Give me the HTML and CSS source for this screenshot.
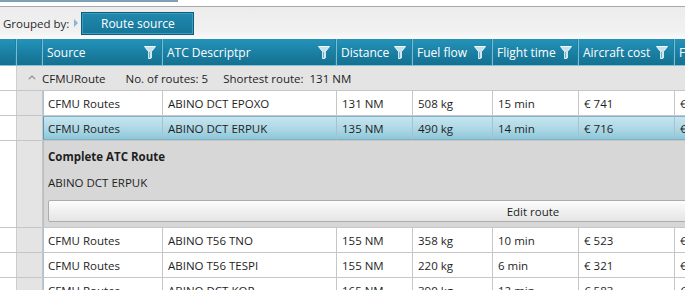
FILE: index.html
```html
<!DOCTYPE html>
<html lang="en">

<head>
    <meta charset="UTF-8">
    <title>Route options</title>
    <link rel="stylesheet" href="styles.css">
</head>

<body>
    <div class="top-strip">
        <div class="tab-line"></div>
    </div>

    <div class="group-panel">
        <span class="group-label">Grouped by:</span>
        <span class="group-arrow"></span>
        <button class="group-chip">Route source</button>
    </div>

    <div class="grid">
        <div class="row header">
            <div class="cell"></div>
            <div class="cell"></div>
            <div class="cell">Source <svg class="funnel" width="12" height="13" viewBox="0 0 12 13"><path d="M0.5 0.5h11l-4.2 5.2v6.3l-2.6 0.8v-7.1z" /><path d="M5.5 6v6" class="stem" /></svg></div>
            <div class="cell">ATC Descriptpr <svg class="funnel" width="12" height="13" viewBox="0 0 12 13"><path d="M0.5 0.5h11l-4.2 5.2v6.3l-2.6 0.8v-7.1z" /><path d="M5.5 6v6" class="stem" /></svg></div>
            <div class="cell">Distance <svg class="funnel" width="12" height="13" viewBox="0 0 12 13"><path d="M0.5 0.5h11l-4.2 5.2v6.3l-2.6 0.8v-7.1z" /><path d="M5.5 6v6" class="stem" /></svg></div>
            <div class="cell">Fuel flow <svg class="funnel" width="12" height="13" viewBox="0 0 12 13"><path d="M0.5 0.5h11l-4.2 5.2v6.3l-2.6 0.8v-7.1z" /><path d="M5.5 6v6" class="stem" /></svg></div>
            <div class="cell">Flight time <svg class="funnel" width="12" height="13" viewBox="0 0 12 13"><path d="M0.5 0.5h11l-4.2 5.2v6.3l-2.6 0.8v-7.1z" /><path d="M5.5 6v6" class="stem" /></svg></div>
            <div class="cell">Aircraft cost <svg class="funnel" width="12" height="13" viewBox="0 0 12 13"><path d="M0.5 0.5h11l-4.2 5.2v6.3l-2.6 0.8v-7.1z" /><path d="M5.5 6v6" class="stem" /></svg></div>
            <div class="cell">Fuel cost <svg class="funnel" width="12" height="13" viewBox="0 0 12 13"><path d="M0.5 0.5h11l-4.2 5.2v6.3l-2.6 0.8v-7.1z" /><path d="M5.5 6v6" class="stem" /></svg></div>
        </div>

        <div class="row group-row">
            <div class="cell"></div>
            <div class="group-body">
                <svg class="caret" width="8" height="5" viewBox="0 0 8 5"><path d="M0.8 4.2l3.2-3.2 3.2 3.2" /></svg>
                <span class="group-name">CFMURoute</span>
                <span class="group-info">No. of routes: 5</span>
                <span class="group-info">Shortest route:&nbsp; 131 NM</span>
            </div>
        </div>

        <div class="row data first">
            <div class="cell"></div>
            <div class="cell indent"></div>
            <div class="cell src">CFMU Routes</div>
            <div class="cell">ABINO DCT EPOXO</div>
            <div class="cell">131 NM</div>
            <div class="cell">508 kg</div>
            <div class="cell">15 min</div>
            <div class="cell">€ 741</div>
            <div class="cell">€ 1 204</div>
        </div>

        <div class="row data selected">
            <div class="cell"></div>
            <div class="cell indent"></div>
            <div class="cell src">CFMU Routes</div>
            <div class="cell">ABINO DCT ERPUK</div>
            <div class="cell">135 NM</div>
            <div class="cell">490 kg</div>
            <div class="cell">14 min</div>
            <div class="cell">€ 716</div>
            <div class="cell">€ 1 162</div>
        </div>

        <div class="row details">
            <div class="cell"></div>
            <div class="cell indent"></div>
            <div class="detail-panel">
                <div class="detail-title">Complete ATC Route</div>
                <div class="detail-text">ABINO DCT ERPUK</div>
                <button class="edit-button">Edit route</button>
            </div>
        </div>

        <div class="row data">
            <div class="cell"></div>
            <div class="cell indent"></div>
            <div class="cell src">CFMU Routes</div>
            <div class="cell">ABINO T56 TNO</div>
            <div class="cell">155 NM</div>
            <div class="cell">358 kg</div>
            <div class="cell">10 min</div>
            <div class="cell">€ 523</div>
            <div class="cell">€ 850</div>
        </div>

        <div class="row data">
            <div class="cell"></div>
            <div class="cell indent"></div>
            <div class="cell src">CFMU Routes</div>
            <div class="cell">ABINO T56 TESPI</div>
            <div class="cell">155 NM</div>
            <div class="cell">220 kg</div>
            <div class="cell">6 min</div>
            <div class="cell">€ 321</div>
            <div class="cell">€ 522</div>
        </div>

        <div class="row data">
            <div class="cell"></div>
            <div class="cell indent"></div>
            <div class="cell src">CFMU Routes</div>
            <div class="cell">ABINO DCT KOR</div>
            <div class="cell">165 NM</div>
            <div class="cell">390 kg</div>
            <div class="cell">12 min</div>
            <div class="cell">€ 583</div>
            <div class="cell">€ 947</div>
        </div>
    </div>
</body>

</html>
```

FILE: styles.css
```css
body {
    margin: 0;
    width: 685px;
    height: 290px;
    overflow: hidden;
    background-color: #ffffff;
    font-family: "Open Sans", "Noto Sans", sans-serif;
    font-size: 11.5px;
    color: #1e1e1e;
}

.top-strip {
    height: 6px;
    border-bottom: 1px solid #a9a9a9;
}

.tab-line {
    width: 178px;
    height: 2px;
    background-color: #7f9fb4;
}

.group-panel {
    height: 32px;
    display: flex;
    align-items: center;
    padding-left: 3px;
    background: linear-gradient(#ececec, #f1f1f1 75%, #fafafa);
}

.group-label {
    color: #2a2a2a;
}

.group-arrow {
    width: 0;
    height: 0;
    margin-left: 5px;
    margin-right: 3px;
    border-left: 4px solid #86b7d1;
    border-top: 4px solid transparent;
    border-bottom: 4px solid transparent;
}

.group-chip {
    width: 113px;
    height: 23px;
    margin-top: 1px;
    padding: 0;
    border: 1px solid #0f5c7a;
    box-shadow: inset 0 0 0 1px #3a9ec2;
    background: linear-gradient(#2089ae, #167699);
    color: #ffffff;
    font-family: inherit;
    font-size: 12px;
}

/* grid */

.grid {
    width: 1023px;
}

.row {
    display: grid;
    grid-template-columns: 17px 26px 120px 174px 76px 80px 86px 96px 348px;
}

.cell {
    box-sizing: border-box;
    border-right: 1px solid #c6c6c6;
    white-space: nowrap;
    overflow: hidden;
}

.header {
    height: 27px;
    background: linear-gradient(#2493b9, #1a7fa3 55%, #15708f);
    border-bottom: 1px solid #86c3d8;
    box-sizing: border-box;
}

.header .cell {
    display: flex;
    align-items: center;
    justify-content: space-between;
    padding: 0 6px 0 4px;
    color: #ffffff;
    font-size: 12px;
    border-right: 1px solid #79bcd3;
    box-shadow: inset -1px 0 0 #1f7fa0;
}

.funnel path {
    fill: #c4e2ec;
    stroke: #f4fbfd;
    stroke-width: 1;
}

.funnel .stem {
    fill: none;
    stroke: #6fb0c7;
}

.group-row {
    height: 24px;
}

.group-row .cell {
    border-right: 1px solid #cfcfcf;
}

.group-body {
    grid-column: 2 / 10;
    display: flex;
    align-items: center;
    background-color: #e4e4e4;
    padding-left: 11px;
}

.caret {
    margin-right: 6px;
    margin-top: -1px;
}

.caret path {
    fill: none;
    stroke: #8c8c8c;
    stroke-width: 1.2;
}

.group-name {
    margin-right: 20px;
}

.group-info {
    margin-right: 15px;
}

.data {
    height: 25px;
    border-bottom: 1px solid #c6c6c6;
    box-sizing: border-box;
}

.data.first {
    height: 26px;
    border-top: 1px solid #c6c6c6;
}

.data .cell {
    display: flex;
    align-items: center;
    padding-left: 5px;
}

.data .cell:first-child {
    border-right-color: #cdcdcd;
}

.indent {
    background-color: #e4e4e4;
}

.data .src {
    border-left: 1px solid #a6c4d8;
    padding-left: 4px;
}

.selected {
    border-bottom: 1px solid #c6c6c6;
}

.selected .cell:nth-child(n+3) {
    background: linear-gradient(#c6e5ef, #a9d6e4 60%, #8ec6d8);
    border-top: 1px solid #7eb6ca;
    border-bottom: 1px solid #7ab2c6;
    border-right-color: #a7c2cc;
}

.selected .src {
    border-left-color: #5d98b6;
}

/* row details */

.details {
    height: 87px;
    border-bottom: 1px solid #c6c6c6;
    box-sizing: border-box;
}

.details .cell {
    height: 86px;
}

.detail-panel {
    grid-column: 3 / 10;
    background-color: #d7d7d7;
    border-left: 1px solid #bcbcbc;
    padding: 8px 5px 0 4px;
}

.detail-title {
    font-weight: bold;
    line-height: 16px;
}

.detail-text {
    line-height: 16px;
    margin-top: 10px;
}

.edit-button {
    display: block;
    width: 970px;
    height: 22px;
    margin-top: 9px;
    padding: 0;
    border: 1px solid #acacac;
    border-radius: 2px;
    background: linear-gradient(#fdfdfd, #f0f0f0 50%, #e5e5e5);
    font-family: inherit;
    font-size: 11.5px;
    color: #1e1e1e;
}
```
